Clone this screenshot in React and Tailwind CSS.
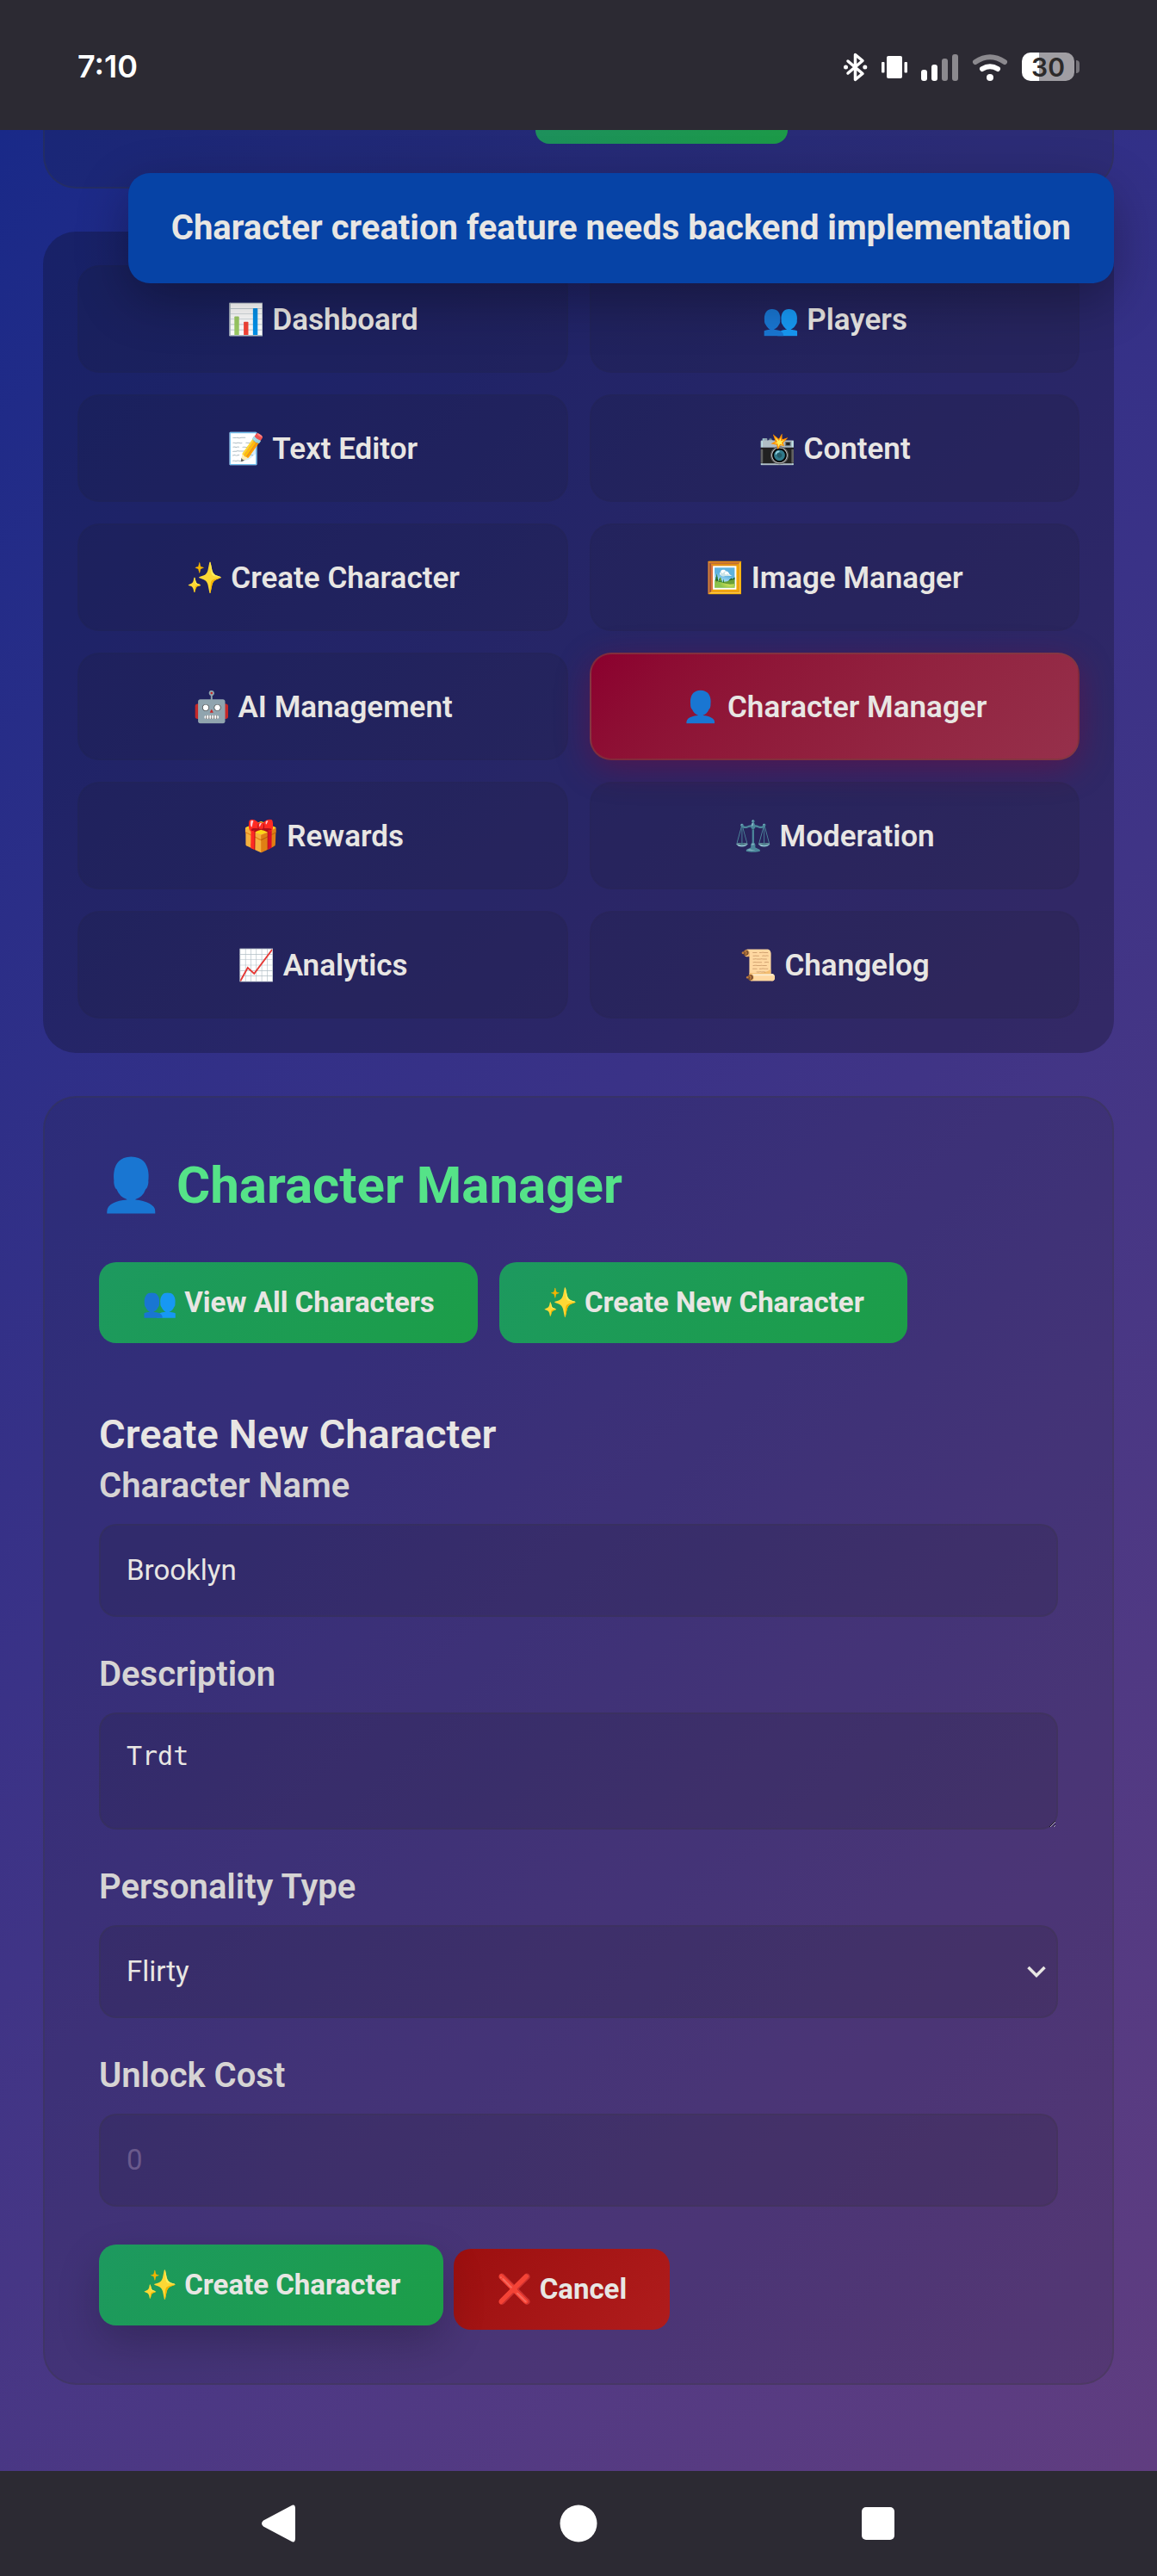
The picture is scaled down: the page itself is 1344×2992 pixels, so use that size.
const navItems = [
  ["📊", "Dashboard"],
  ["👥", "Players"],
  ["📝", "Text Editor"],
  ["📸", "Content"],
  ["✨", "Create Character"],
  ["🖼️", "Image Manager"],
  ["🤖", "AI Management"],
  ["👤", "Character Manager"],
  ["🎁", "Rewards"],
  ["⚖️", "Moderation"],
  ["📈", "Analytics"],
  ["📜", "Changelog"],
];

const green =
  "rounded-[20px] bg-linear-135 from-[#1d995f] to-[#1c9e47] px-[50px] py-[26px] text-[33px] leading-[42px] font-bold";
const field =
  "block w-full rounded-[20px] border-2 border-[#3a3c3e]/20 bg-[#181a1b]/13 px-[30px] text-[33px] outline-none";
const label = "mb-[20px] block text-[40px] leading-[48px] font-semibold text-[#d6d4d4]";

function StatusBar() {
  return (
    <header className="flex items-center justify-between bg-[#2c2a33] px-[90px] pt-[53px] pb-[49px] text-white">
      <span className="font-['Inter',sans-serif] text-[36px] leading-[49px] font-semibold">7:10</span>
      <div className="flex items-center gap-4">
        <svg width="28" height="34" viewBox="0 0 28 34" fill="none" stroke="white" strokeWidth="3.500" strokeLinejoin="round" strokeLinecap="round">
          <path d="M5 10 L22 24.500 L13.500 31.500 V2.500 L22 9.500 L5 24" />
          <circle cx="2.500" cy="17" r="2.500" fill="white" stroke="none" />
          <circle cx="24.800" cy="17" r="2.500" fill="white" stroke="none" />
        </svg>
        <svg width="30" height="28" viewBox="0 0 30 28" fill="white">
          <rect x="6" y="1" width="18" height="26" rx="2" />
          <rect x="0" y="8" width="3.500" height="12.500" rx="1" />
          <rect x="26.500" y="8" width="3.500" height="12.500" rx="1" />
        </svg>
        <svg width="43" height="32" viewBox="0 0 43 32" fill="white">
          <rect x="0" y="19" width="7" height="13" rx="3" />
          <rect x="12" y="13" width="7" height="19" rx="3" />
          <rect x="24" y="6" width="7" height="26" rx="3" fill="#8b898e" />
          <rect x="36" y="1" width="7" height="31" rx="3" fill="#8b898e" />
        </svg>
        <svg width="42" height="32" viewBox="0 0 42 32" fill="none" strokeLinecap="round" strokeWidth="6">
          <path d="M4 10 Q21 -1.500 38 10" stroke="#8b898e" />
          <path d="M12 18 Q21 12.500 30 18" stroke="white" />
          <circle cx="21" cy="28" r="4" fill="white" />
        </svg>
        <div className="flex items-center gap-[2px]">
          <div className="flex h-[33px] w-[61px] items-center justify-center rounded-[10px] bg-linear-90 from-white from-33% to-[#a09ea3] to-33% font-['Inter',sans-serif] text-[30px] leading-none font-semibold text-[#2c2a2a]">
            30
          </div>
          <div className="h-[15px] w-[4px] rounded-r-[4px] bg-[#77757b]" />
        </div>
      </div>
    </header>
  );
}

function SystemNav() {
  return (
    <nav aria-label="System" className="flex h-[122px] items-center justify-around bg-[#2c2a33] px-[150px]">
      <button aria-label="Back">
        <svg width="44" height="44" viewBox="0 0 44 44" fill="white">
          <path d="M36 1.500 Q41 -1.500 41 5 V39 Q41 45.500 36 42.500 L4 25.500 Q0 22 4 18.500 Z" />
        </svg>
      </button>
      <button aria-label="Home">
        <svg width="44" height="44" viewBox="0 0 44 44" fill="white">
          <circle cx="22" cy="22" r="21.500" />
        </svg>
      </button>
      <button aria-label="Recent apps">
        <svg width="44" height="44" viewBox="0 0 44 44" fill="white">
          <rect x="3" y="3" width="38" height="38" rx="5" />
        </svg>
      </button>
    </nav>
  );
}

export default function App() {
  return (
    <div className="flex min-h-screen flex-col font-['Roboto',sans-serif] text-[#e8e6e3]">
      <StatusBar />
      <main className="relative flex grow flex-col gap-[50px] bg-linear-135 from-[#192988] via-[#3a3287] via-45% to-[#603d80] px-[50px] pb-[100px]">
        <div role="status" className="absolute top-[50px] right-[50px] z-10 rounded-[25px] bg-[#0643a6] px-[50px] py-[40px] text-[40px] leading-[48px] font-bold shadow-[0_20px_60px_rgba(0,0,0,0.3)]">
          Character creation feature needs backend implementation
        </div>

        <section className="rounded-b-[38px] border-2 border-t-0 border-[#3a3c3e]/30 bg-[#181a1b]/15 pb-[50px]">
          <div className="ml-[46%] h-4 w-[293px] rounded-b-[20px] bg-linear-135 from-[#1d905c] to-[#1c9a47]" />
        </section>

        <nav aria-label="Admin sections" className="grid grid-cols-2 gap-[25px] rounded-[38px] bg-[#0a0a14]/27 px-[40px] pt-[39px] pb-[40px]">
          {navItems.map(([icon, text]) => (
            <button
              key={text}
              className={
                text === "Character Manager"
                  ? "rounded-[25px] border-2 border-[#7d3a40]/70 bg-linear-135 from-[#8b002e] to-[#96304b] pt-[40px] pb-[38px] text-[35px] leading-[43px] font-semibold shadow-[0_10px_38px_rgba(139,0,46,0.4)]"
                  : "rounded-[25px] border-2 border-[#3a3c3e]/5 bg-[#181a1b]/12 pt-[40px] pb-[38px] text-[35px] leading-[43px] font-semibold"
              }
            >
              {icon} {text}
            </button>
          ))}
        </nav>

        <section className="rounded-[38px] border-2 border-[#3a3c3e]/30 bg-[#181a1b]/12 px-[63px] pt-[63px] pb-[62px]">
          <h1 className="mb-[50px] text-[60px] leading-[78px] font-bold text-[#55e388]">👤 Character Manager</h1>
          <div className="mb-[78px] flex flex-wrap gap-[25px]">
            <button className={green}>👥 View All Characters</button>
            <button className={green}>✨ Create New Character</button>
          </div>
          <h2 className="mb-[8px] text-[47px] leading-[56px] font-semibold">Create New Character</h2>
          <form onSubmit={(e) => e.preventDefault()}>
            <div className="mb-[43px]">
              <label htmlFor="name" className={label}>Character Name</label>
              <input id="name" type="text" defaultValue="Brooklyn" className={field + " py-[32px] leading-[40px]"} />
            </div>
            <div className="mb-[43px]">
              <label htmlFor="description" className={label}>Description</label>
              <textarea id="description" rows={2} defaultValue="Trdt" className={field + " h-[136px] py-[30px] font-['DejaVu_Sans_Mono',monospace] text-[30px]! leading-[37px]"} />
            </div>
            <div className="mb-[43px]">
              <label htmlFor="personality" className={label}>Personality Type</label>
              <div className="relative">
                <select id="personality" defaultValue="Flirty" className={field + " appearance-none py-[32px] leading-[40px]"}>
                  <option>Flirty</option>
                </select>
                <svg className="pointer-events-none absolute top-1/2 right-[14px] -translate-y-1/2" width="22" height="14" viewBox="0 0 22 14" fill="none" stroke="#e8e6e3" strokeWidth="3.500">
                  <path d="M1.500 2 L11 11.500 L20.500 2" />
                </svg>
              </div>
            </div>
            <div className="mb-[49px]">
              <label htmlFor="cost" className={label}>Unlock Cost</label>
              <input id="cost" type="number" placeholder="0" className={field + " py-[32px] leading-[40px] placeholder:text-[#6a5a8c]"} />
            </div>
            <div className="flex gap-[12px]">
              <button type="submit" className={green + " -translate-y-[5px] shadow-[0_20px_50px_rgba(0,0,0,0.2)]"}>✨ Create Character</button>
              <button type="button" className="rounded-[20px] bg-linear-135 from-[#9c0f0f] to-[#b01c1c] px-[50px] py-[26px] text-[33px] leading-[42px] font-bold">❌ Cancel</button>
            </div>
          </form>
        </section>
      </main>
      <SystemNav />
    </div>
  );
}
